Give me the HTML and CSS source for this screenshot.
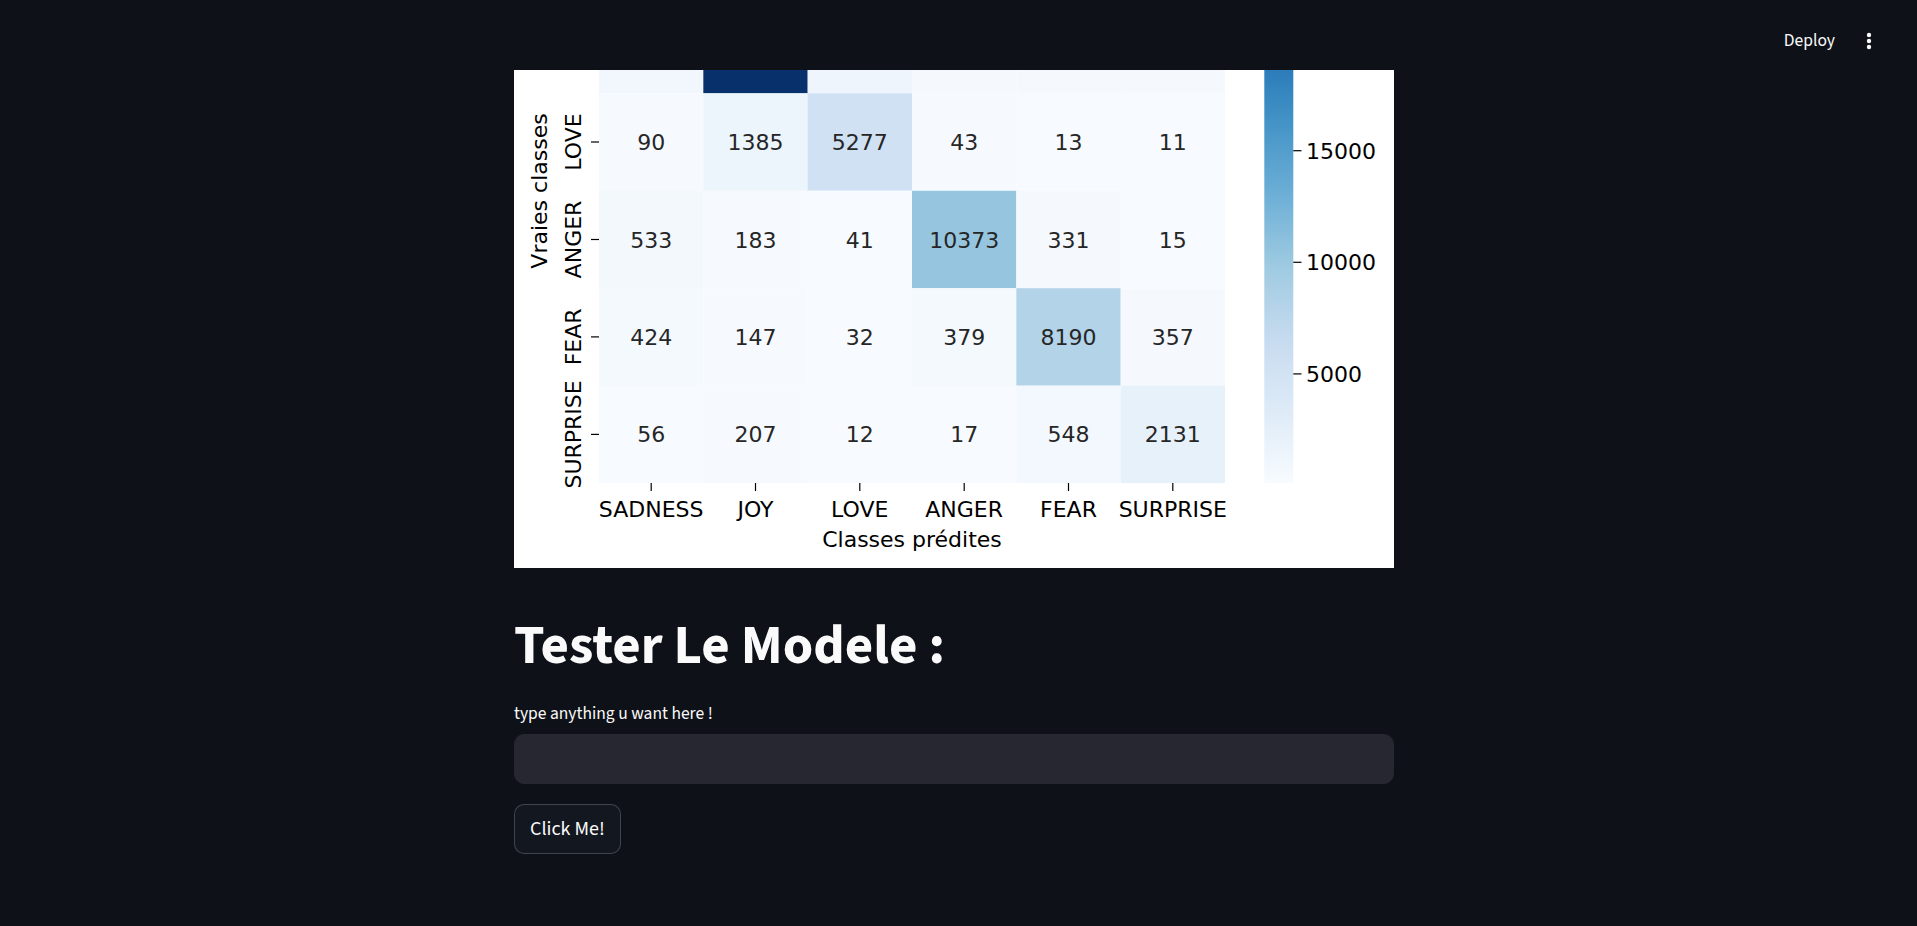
FILE: index.html
```html
<!DOCTYPE html>
<html lang="fr">
<head>
<meta charset="utf-8">
<title>Streamlit</title>
<link rel="stylesheet" href="styles.css">
</head>
<body>
<header class="topbar">
  <span class="deploy">Deploy</span>
  <span class="menu">
    <svg width="20" height="20" viewBox="0 0 20 20"><circle cx="10" cy="4" r="2.2" fill="#fafafa"/><circle cx="10" cy="10" r="2.2" fill="#fafafa"/><circle cx="10" cy="16" r="2.2" fill="#fafafa"/></svg>
  </span>
</header>
<main class="main">
  <div class="block">
    <div class="figure">
      <svg class="plot" width="880" height="498" viewBox="0 0 880 498" xmlns="http://www.w3.org/2000/svg">
        <defs>
          <linearGradient id="blues" gradientUnits="userSpaceOnUse" x1="0" y1="0" x2="0" y2="413">
            <stop offset="0" stop-color="#2c7cbb"/>
            <stop offset="0.12" stop-color="#4292c6"/>
            <stop offset="0.297" stop-color="#6baed6"/>
            <stop offset="0.474" stop-color="#9ecae1"/>
            <stop offset="0.651" stop-color="#c6dbef"/>
            <stop offset="0.829" stop-color="#deebf7"/>
            <stop offset="1" stop-color="#f7fbff"/>
          </linearGradient>
        </defs>
        <rect x="0" y="0" width="880" height="498" fill="#ffffff"/>
        <!-- JOY row (partial) -->
        <rect x="85" y="-74.15" width="104.4" height="97.5" fill="#f1f7fd"/>
        <rect x="189.33" y="-74.15" width="104.4" height="97.5" fill="#08306b"/>
        <rect x="293.67" y="-74.15" width="104.4" height="97.5" fill="#eef5fc"/>
        <rect x="398" y="-74.15" width="104.4" height="97.5" fill="#f5f9fe"/>
        <rect x="502.33" y="-74.15" width="104.4" height="97.5" fill="#f5f9fe"/>
        <rect x="606.67" y="-74.15" width="104.33" height="97.5" fill="#f5f9fe"/>
        <!-- LOVE row -->
        <rect x="85" y="23.3" width="104.4" height="97.5" fill="#f6faff"/>
        <rect x="189.33" y="23.3" width="104.4" height="97.5" fill="#ecf4fc"/>
        <rect x="293.67" y="23.3" width="104.4" height="97.5" fill="#cfe1f2"/>
        <rect x="398" y="23.3" width="104.4" height="97.5" fill="#f6faff"/>
        <rect x="502.33" y="23.3" width="104.4" height="97.5" fill="#f7fbff"/>
        <rect x="606.67" y="23.3" width="104.33" height="97.5" fill="#f7fbff"/>
        <!-- ANGER row -->
        <rect x="85" y="120.75" width="104.4" height="97.5" fill="#f3f8fd"/>
        <rect x="189.33" y="120.75" width="104.4" height="97.5" fill="#f6fafe"/>
        <rect x="293.67" y="120.75" width="104.4" height="97.5" fill="#f7fbff"/>
        <rect x="398" y="120.75" width="104.4" height="97.5" fill="#96c6df"/>
        <rect x="502.33" y="120.75" width="104.4" height="97.5" fill="#f5f9fe"/>
        <rect x="606.67" y="120.75" width="104.33" height="97.5" fill="#f7fbff"/>
        <!-- FEAR row -->
        <rect x="85" y="218.2" width="104.4" height="97.5" fill="#f4f9fe"/>
        <rect x="189.33" y="218.2" width="104.4" height="97.5" fill="#f6faff"/>
        <rect x="293.67" y="218.2" width="104.4" height="97.5" fill="#f7fbff"/>
        <rect x="398" y="218.2" width="104.4" height="97.5" fill="#f4f9fe"/>
        <rect x="502.33" y="218.2" width="104.4" height="97.5" fill="#b2d3e8"/>
        <rect x="606.67" y="218.2" width="104.33" height="97.5" fill="#f5f9fe"/>
        <!-- SURPRISE row -->
        <rect x="85" y="315.65" width="104.4" height="97.45" fill="#f7fbff"/>
        <rect x="189.33" y="315.65" width="104.4" height="97.45" fill="#f6fafe"/>
        <rect x="293.67" y="315.65" width="104.4" height="97.45" fill="#f7fbff"/>
        <rect x="398" y="315.65" width="104.4" height="97.45" fill="#f7fbff"/>
        <rect x="502.33" y="315.65" width="104.4" height="97.45" fill="#f3f8fe"/>
        <rect x="606.67" y="315.65" width="104.33" height="97.45" fill="#e7f1fa"/>

        <g class="annot" text-anchor="middle">
          <text x="137.2" y="80">90</text>
          <text x="241.5" y="80">1385</text>
          <text x="345.8" y="80">5277</text>
          <text x="450.2" y="80">43</text>
          <text x="554.5" y="80">13</text>
          <text x="658.8" y="80">11</text>

          <text x="137.2" y="177.5">533</text>
          <text x="241.5" y="177.5">183</text>
          <text x="345.8" y="177.5">41</text>
          <text x="450.2" y="177.5">10373</text>
          <text x="554.5" y="177.5">331</text>
          <text x="658.8" y="177.5">15</text>

          <text x="137.2" y="275">424</text>
          <text x="241.5" y="275">147</text>
          <text x="345.8" y="275">32</text>
          <text x="450.2" y="275">379</text>
          <text x="554.5" y="275">8190</text>
          <text x="658.8" y="275">357</text>

          <text x="137.2" y="372.4">56</text>
          <text x="241.5" y="372.4">207</text>
          <text x="345.8" y="372.4">12</text>
          <text x="450.2" y="372.4">17</text>
          <text x="554.5" y="372.4">548</text>
          <text x="658.8" y="372.4">2131</text>
        </g>

        <!-- y ticks -->
        <g stroke="#000" stroke-width="1.2">
          <line x1="77" y1="72" x2="85" y2="72"/>
          <line x1="77" y1="169.5" x2="85" y2="169.5"/>
          <line x1="77" y1="266.9" x2="85" y2="266.9"/>
          <line x1="77" y1="364.4" x2="85" y2="364.4"/>
        </g>
        <g class="ticklabel" text-anchor="middle">
          <text x="67" y="72" transform="rotate(-90 67 72)">LOVE</text>
          <text x="67" y="169.5" transform="rotate(-90 67 169.5)">ANGER</text>
          <text x="67" y="266.9" transform="rotate(-90 67 266.9)">FEAR</text>
          <text x="67" y="364.4" transform="rotate(-90 67 364.4)">SURPRISE</text>
          <text x="33" y="121" transform="rotate(-90 33 121)">Vraies classes</text>
        </g>

        <!-- x ticks -->
        <g stroke="#000" stroke-width="1.2">
          <line x1="137.2" y1="413" x2="137.2" y2="421"/>
          <line x1="241.5" y1="413" x2="241.5" y2="421"/>
          <line x1="345.8" y1="413" x2="345.8" y2="421"/>
          <line x1="450.2" y1="413" x2="450.2" y2="421"/>
          <line x1="554.5" y1="413" x2="554.5" y2="421"/>
          <line x1="658.8" y1="413" x2="658.8" y2="421"/>
        </g>
        <g class="ticklabel" text-anchor="middle">
          <text x="137.2" y="446.6">SADNESS</text>
          <text x="241.5" y="446.6">JOY</text>
          <text x="345.8" y="446.6">LOVE</text>
          <text x="450.2" y="446.6">ANGER</text>
          <text x="554.5" y="446.6">FEAR</text>
          <text x="658.8" y="446.6">SURPRISE</text>
          <text x="398" y="477">Classes prédites</text>
        </g>

        <!-- colorbar -->
        <rect x="750.3" y="0" width="29" height="413" fill="url(#blues)"/>
        <g stroke="#000" stroke-width="1.2">
          <line x1="779.3" y1="80.7" x2="787.5" y2="80.7"/>
          <line x1="779.3" y1="192.3" x2="787.5" y2="192.3"/>
          <line x1="779.3" y1="303.9" x2="787.5" y2="303.9"/>
        </g>
        <g class="ticklabel">
          <text x="792" y="88.7">15000</text>
          <text x="792" y="200.3">10000</text>
          <text x="792" y="311.9">5000</text>
        </g>
      </svg>
    </div>

    <h1 class="title">Tester Le Modele :</h1>

    <div class="field">
      <label class="field-label" for="q">type anything u want here !</label>
      <input class="field-input" id="q" type="text">
    </div>

    <div class="actions">
      <button class="btn" type="button">Click Me!</button>
    </div>
  </div>
</main>
</body>
</html>
```

FILE: styles.css
```css
html, body {
  margin: 0;
  padding: 0;
  background: #0e1117;
  color: #fafafa;
  font-family: "Source Sans Pro", "Source Sans 3", Lato, sans-serif;
  height: 100%;
  overflow: hidden;
}

.topbar {
  height: 70px;
  box-sizing: border-box;
  display: flex;
  justify-content: flex-end;
  align-items: center;
  padding: 11px 38px 0 0;
}

.deploy {
  font-size: 17.5px;
  line-height: 24px;
  color: #fafafa;
  margin-right: 24px;
}

.menu {
  display: flex;
  width: 20px;
  height: 20px;
}

.main {
  display: flex;
  justify-content: center;
  padding-right: 9px;
}

.block {
  width: 880px;
  display: flex;
  flex-direction: column;
  gap: 20px;
}

.figure {
  height: 498px;
  overflow: hidden;
  background: #ffffff;
}

.plot {
  display: block;
}

.annot text {
  font-family: "DejaVu Sans", sans-serif;
  font-size: 22px;
  fill: #262626;
}

.ticklabel text {
  font-family: "DejaVu Sans", sans-serif;
  font-size: 22px;
  fill: #000000;
}

.title {
  margin: 0;
  padding: 25px 0 0 0;
  font-size: 55px;
  line-height: 66px;
  font-weight: 700;
  color: #fafafa;
}

.field {
  display: flex;
  flex-direction: column;
}

.field-label {
  font-size: 17.5px;
  line-height: 30px;
  height: 30px;
  margin-bottom: 5px;
  color: #fafafa;
}

.field-input {
  height: 50px;
  box-sizing: border-box;
  width: 100%;
  background: #262730;
  border: 1px solid #262730;
  border-radius: 10px;
  outline: none;
  color: #fafafa;
  font-family: inherit;
  font-size: 20px;
  padding: 0 16px;
}

.actions {
  display: flex;
}

.btn {
  height: 50px;
  box-sizing: border-box;
  padding: 0 15px;
  background: rgb(19, 23, 32);
  border: 1px solid rgba(250, 250, 250, 0.2);
  border-radius: 10px;
  color: #fafafa;
  font-family: inherit;
  font-size: 20px;
  line-height: 1;
}
```
